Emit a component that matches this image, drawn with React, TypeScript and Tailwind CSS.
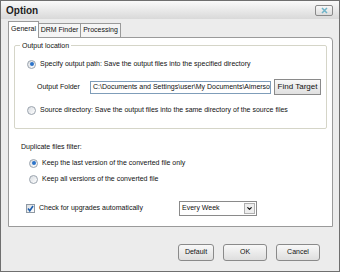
import { ChevronDown } from 'lucide-react';

function Radio({ checked }: { checked?: boolean }) {
  return (
    <span className="flex h-[9px] w-[9px] shrink-0 items-center justify-center rounded-full border border-[#9aa3ad] bg-gradient-to-br from-[#d9dde2] to-[#ffffff]">
      {checked && <span className="h-[4px] w-[4px] rounded-full bg-[#2b73c9]" />}
    </span>
  );
}

function Checkbox() {
  return (
    <span className="flex h-[9px] w-[9px] shrink-0 items-center justify-center border border-[#8f99a3] bg-gradient-to-br from-[#d9dde2] to-white">
      <svg width="7" height="7" viewBox="0 0 7 7">
        <path d="M1 3.5 L2.8 5.8 L6 1" fill="none" stroke="#1f5fae" strokeWidth="1.6" />
      </svg>
    </span>
  );
}

function Button({ label, w }: { label: string; w: string }) {
  return (
    <button
      type="button"
      className={`h-[17px] ${w} rounded-[3px] border border-[#8a8a8a] bg-gradient-to-b from-[#f8f8f8] to-[#dedede] text-[7px] text-[#111]`}
    >
      {label}
    </button>
  );
}

export default function App() {
  return (
    <div className="flex h-[272px] w-[340px] flex-col overflow-hidden border border-[#6f6f6f] bg-[#ececec] font-['Liberation_Sans',Arial,sans-serif] text-[7px] text-[#111]">
      {/* title bar */}
      <div className="flex h-[18px] shrink-0 items-center justify-between bg-gradient-to-b from-[#fafafa] to-[#d9d9d9] pl-[5px] pr-[6px]">
        <span className="text-[10px] font-bold text-[#1e1e1e]">Option</span>
        <span className="flex h-[11px] w-[18px] items-center justify-center rounded-[2px] border border-[#8a8a8a] bg-gradient-to-b from-[#f8f8f8] to-[#dcdcdc]">
          <svg width="7" height="7" viewBox="0 0 7 7">
            <path d="M1 1 L6 6 M6 1 L1 6" stroke="#6fb3c8" strokeWidth="1.5" />
          </svg>
        </span>
      </div>

      {/* tabs */}
      <div className="ml-[7px] mt-[2px] flex h-[16px] items-end">
        <div className="relative z-10 -mb-[1px] flex h-[17px] w-[31px] items-center justify-center border border-b-0 border-[#9a9a9a] bg-white pb-[1px]">
          General
        </div>
        <div className="flex h-[14px] w-[42px] items-center justify-center border border-b-0 border-l-0 border-[#9a9a9a] bg-[#f5f5f5]">
          DRM Finder
        </div>
        <div className="flex h-[14px] w-[40px] items-center justify-center border border-b-0 border-l-0 border-[#9a9a9a] bg-[#f5f5f5]">
          Processing
        </div>
      </div>

      {/* panel */}
      <div className="ml-[7px] flex h-[190px] w-[325px] flex-col rounded-tr-[4px] border border-[#9a9a9a] bg-white pl-[5px] pr-[5px]">
        <fieldset className="mt-[1px] rounded-[2px] border border-[#d5d5c8] px-[3px] pb-[6px]">
          <legend className="ml-[2px] px-[2px] leading-[13px]">Output location</legend>
          <div className="flex h-[24px] items-center gap-[4px] pl-[9px]">
            <Radio checked />
            <span>Specify output path: Save the output files into the specified directory</span>
          </div>
          <div className="flex h-[22px] items-center pl-[19px]">
            <span className="w-[53px]">Output Folder</span>
            <div className="flex h-[13px] w-[181px] items-center overflow-hidden whitespace-nowrap border border-[#7f9db9] px-[2px]">
              C:\Documents and Settings\user\My Documents\Aimersoft
            </div>
            <button
              type="button"
              className="ml-[3px] h-[16px] w-[47px] border border-[#8a8a8a] bg-gradient-to-b from-[#f8f8f8] to-[#e0e0e0] text-[8px]"
            >
              Find Target
            </button>
          </div>
          <div className="flex h-[24px] items-center gap-[4px] pl-[9px]">
            <Radio />
            <span>Source directory: Save the output files into the same directory of the source files</span>
          </div>
        </fieldset>

        <div className="mt-[10px] flex h-[16px] items-center pl-[7px]">Duplicate files filter:</div>
        <div className="flex h-[16px] items-center gap-[4px] pl-[15px]">
          <Radio checked />
          <span>Keep the last version of the converted file only</span>
        </div>
        <div className="flex h-[16px] items-center gap-[4px] pl-[15px]">
          <Radio />
          <span>Keep all versions of the converted file</span>
        </div>
        <div className="mt-[13px] flex h-[16px] items-center pl-[12px]">
          <Checkbox />
          <span className="ml-[4px] w-[140px]">Check for upgrades automatically</span>
          <div className="flex h-[15px] w-[78px] items-center justify-between border border-[#8a8a8a] bg-white pl-[2px] pr-[1px]">
            <span>Every Week</span>
            <span className="flex h-[11px] w-[11px] items-center justify-center border border-[#b0b0b0] bg-[#eeeeee]">
              <ChevronDown className="h-[7px] w-[7px]" strokeWidth={4} />
            </span>
          </div>
        </div>
      </div>

      {/* buttons */}
      <div className="mt-[17px] flex justify-end gap-[9px] pr-[19px]">
        <Button label="Default" w="w-[36px]" />
        <Button label="OK" w="w-[44px]" />
        <Button label="Cancel" w="w-[44px]" />
      </div>
    </div>
  );
}
